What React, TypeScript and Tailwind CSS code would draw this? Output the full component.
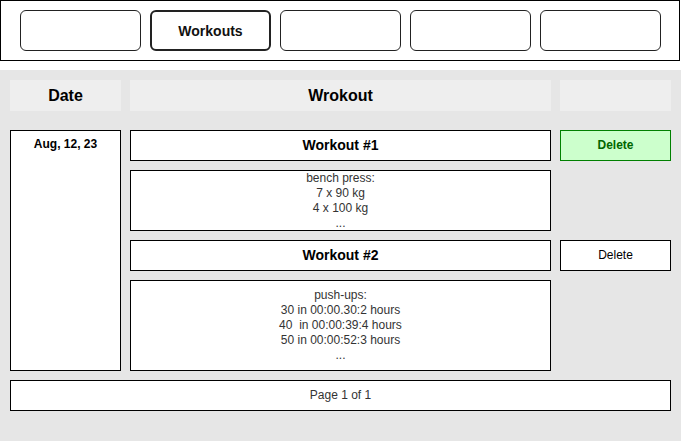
const NAV_ITEMS = ["", "Workouts", "", "", ""];

const WORKOUTS = [
  {
    title: "Workout #1",
    lines: ["bench press:", "7 x 90 kg", "4 x 100 kg", "..."],
    height: "h-[61px]",
    active: true,
  },
  {
    title: "Workout #2",
    lines: [
      "push-ups:",
      "30 in 00:00.30:2 hours",
      "40\u00a0 in 00:00:39:4 hours",
      "50 in 00:00:52:3 hours",
      "...",
    ],
    height: "h-[91px]",
    active: false,
  },
];

export default function App() {
  return (
    <div className="w-[681px] h-[441px] bg-white font-['Liberation_Sans',Arial,sans-serif] text-black">
      <div className="w-[680px] h-[61px] border border-black flex items-center gap-[9px] pl-[19px]">
        {NAV_ITEMS.map((label, i) => (
          <div
            key={i}
            className={`w-[121px] h-[41px] rounded-[6px] flex items-center justify-center pt-[2px] text-[14px] font-bold text-[#111] ${
              label ? "border-2 border-[#222]" : "border border-[#222]"
            }`}
          >
            {label}
          </div>
        ))}
      </div>

      <div className="mt-[9px] h-[371px] bg-[#e6e6e6] pt-[10px] pl-[10px]">
        <div className="grid grid-cols-[111px_421px_111px] gap-x-[9px]">
          <div className="h-[31px] bg-[#eeeeee] flex items-center justify-center text-[16px] font-bold">
            Date
          </div>
          <div className="h-[31px] bg-[#eeeeee] flex items-center justify-center text-[16px] font-bold">
            Wrokout
          </div>
          <div className="h-[31px] bg-[#eeeeee]" />
        </div>

        <div className="mt-[19px] flex gap-[9px]">
          <div className="w-[111px] h-[241px] bg-white border border-black text-center text-[12px] font-bold pt-[4px]">
            Aug, 12, 23
          </div>
          <div className="flex flex-col gap-[9px]">
            {WORKOUTS.map((w) => (
              <div key={w.title} className="flex flex-col gap-[9px]">
                <div className="flex gap-[9px]">
                  <div className="w-[421px] h-[31px] bg-white border border-black flex items-center justify-center text-[14px] font-bold">
                    {w.title}
                  </div>
                  {w.active ? (
                    <div className="w-[111px] h-[31px] bg-[#ccffcc] border border-[#008000] flex items-center justify-center text-[12px] font-bold text-[#006600] pb-[1px]">
                      Delete
                    </div>
                  ) : (
                    <div className="w-[111px] h-[31px] bg-white border border-black flex items-center justify-center text-[12px] pb-[1px]">
                      Delete
                    </div>
                  )}
                </div>
                <div
                  className={`w-[421px] ${w.height} bg-white border border-black flex flex-col items-center justify-center text-[12px] leading-[15px] text-[#333]`}
                >
                  {w.lines.map((line, i) => (
                    <span key={i} className="whitespace-pre">
                      {line}
                    </span>
                  ))}
                </div>
              </div>
            ))}
          </div>
        </div>

        <div className="mt-[9px] w-[661px] h-[31px] bg-white border border-black flex items-center justify-center pb-[1px] text-[12px] text-[#333]">
          Page 1 of 1
        </div>
      </div>
    </div>
  );
}
